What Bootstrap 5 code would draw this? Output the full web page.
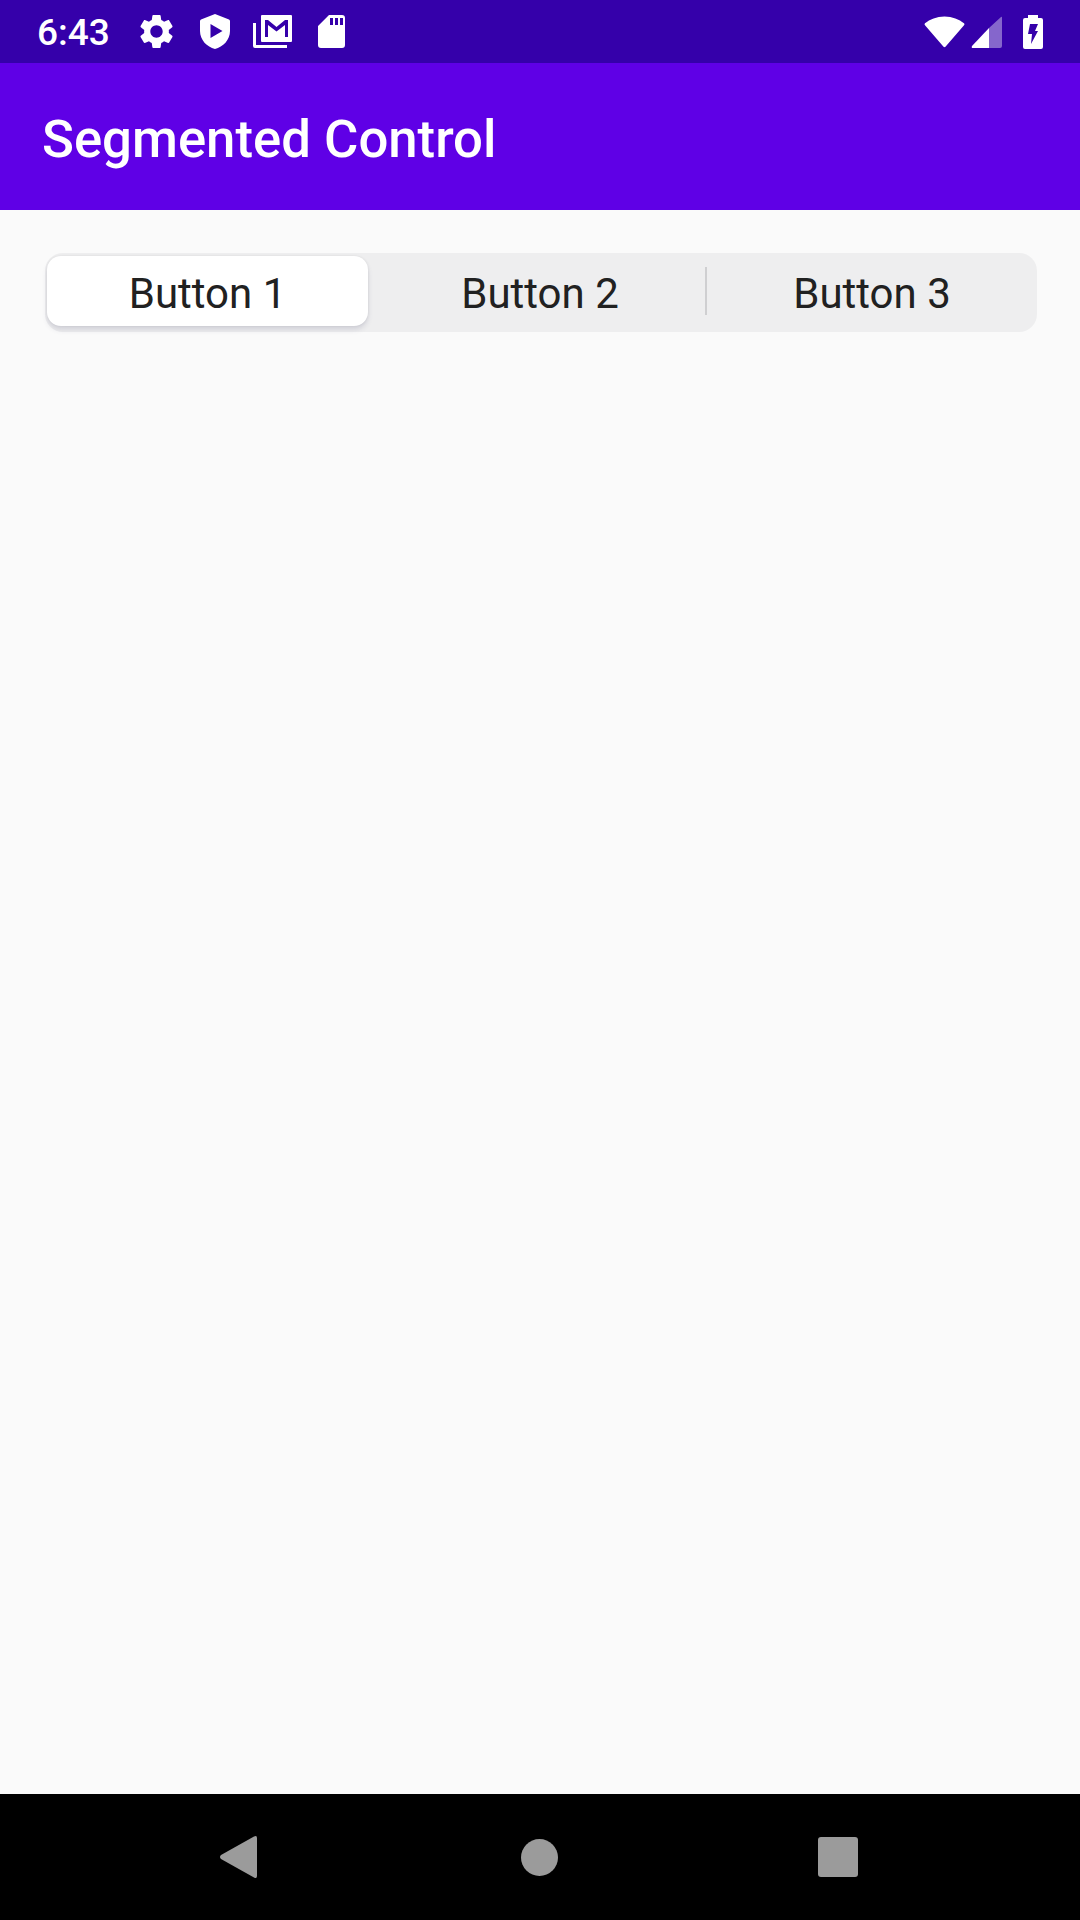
<!DOCTYPE html>
<html lang="en">
<head>
  <meta charset="UTF-8" />
  <meta name="viewport" content="width=device-width, initial-scale=1.0">
  <title>Segmented Control</title>
  <link href="https://cdn.jsdelivr.net/npm/bootstrap@5.3.3/dist/css/bootstrap.min.css" rel="stylesheet">
  <style>
    body{margin:0;background:#fafafa;font-family:Roboto,"Liberation Sans",sans-serif}
    .screen{width:1080px;height:1920px}
    .status-bar{height:63px;background:#3500aa;color:#fff;padding:0 37px 0 37px}
    .status-time{font-size:37px;line-height:1;font-weight:500;margin-right:30px;padding-top:2px}
    .status-icon{fill:#fff;display:block}
    .ic-shield{margin-left:27px}
    .ic-mail{margin-left:23px}
    .ic-sd{margin-left:26px}
    .ic-signal{margin-left:6px}
    .ic-battery{margin-left:21px}
    .app-bar{height:147px;background:#5f00e6;color:#fff;padding:5px 0 0 42px;font-size:52.7px;font-weight:500;line-height:1}
    .content-area{padding:43px 43px 0 45px}
    .seg-track{height:79px;background:#eeeeef;border-radius:18px;padding:3px 0 6px 2px}
    .seg-btn{flex:1 1 0;border:0;background:transparent;padding:6px 0 0;color:#212121;font-size:42px;line-height:1;border-radius:14px}
    .seg-btn.selected{flex:0 0 321px;background:#fff;box-shadow:0 4px 5px rgba(70,70,110,.15),0 0 3px rgba(0,0,0,.08)}
    .seg-btn.middle{flex:0 0 330px}
    .seg-sep{width:2px;height:48px;background:#cfcfd1;flex:none}
    .seg-gap{width:7px;flex:none}
    .nav-bar{height:126px;background:#000;padding-left:220px}
    .nav-icon{fill:#9b9b9b;display:block}
    .ic-home{margin-left:264px}
    .ic-recent{margin-left:260px}
  </style>
</head>
<body>
  <div class="screen d-flex flex-column">
    <!-- Status bar -->
    <div class="status-bar d-flex align-items-center flex-shrink-0">
      <span class="status-time">6:43</span>
      <svg class="status-icon" width="33" height="33" viewBox="2.4 2.4 19.2 19.2"><path fill-rule="evenodd" d="M19.14,12.94c0.04-0.3,0.06-0.61,0.06-0.94c0-0.32-0.02-0.64-0.07-0.94l2.03-1.58c0.18-0.14,0.23-0.41,0.12-0.61l-1.92-3.32c-0.12-0.22-0.37-0.29-0.59-0.22l-2.39,0.96c-0.5-0.38-1.03-0.7-1.62-0.94L14.4,2.81c-0.04-0.24-0.24-0.41-0.48-0.41h-3.84c-0.24,0-0.43,0.17-0.47,0.41L9.25,5.35C8.66,5.59,8.12,5.92,7.63,6.29L5.24,5.33c-0.22-0.08-0.47,0-0.59,0.22L2.74,8.87C2.62,9.08,2.66,9.34,2.86,9.48l2.03,1.58C4.84,11.36,4.8,11.69,4.8,12s0.02,0.64,0.07,0.94l-2.03,1.58c-0.18,0.14-0.23,0.41-0.12,0.61l1.92,3.32c0.12,0.22,0.37,0.29,0.59,0.22l2.39-0.96c0.5,0.38,1.03,0.7,1.62,0.94l0.36,2.54c0.05,0.24,0.24,0.41,0.48,0.41h3.84c0.24,0,0.44-0.17,0.47-0.41l0.36-2.54c0.59-0.24,1.13-0.56,1.62-0.94l2.39,0.96c0.22,0.08,0.47,0,0.59-0.22l1.92-3.32c0.12-0.22,0.07-0.47-0.12-0.61L19.14,12.94z M12,15.6c-1.98,0-3.6-1.62-3.6-3.6s1.62-3.6,3.6-3.6s3.6,1.62,3.6,3.6S13.98,15.6,12,15.6z"/></svg>
      <svg class="status-icon ic-shield" width="30" height="35" viewBox="0 0 30 35"><path fill-rule="evenodd" d="M15 0L29 5.500Q30 6 30 7V17C30 26 23 33 15 35C7 33 0 26 0 17V7Q0 6 1 5.500Z M10.500 10V24L22.500 17Z"/></svg>
      <svg class="status-icon ic-mail" width="39" height="33" viewBox="0 0 39 33"><path fill-rule="evenodd" d="M9 0H38Q39 0 39 1V26Q39 27 38 27H9Q8 27 8 26V1Q8 0 9 0Z M12 5V22H15V10L23.500 16.500L32 10V22H35V5H32L23.500 12L15 5Z"/><path d="M0 8H3V30H34V33H2Q0 33 0 31Z"/></svg>
      <svg class="status-icon ic-sd" width="27" height="33" viewBox="0 0 27 33"><path fill-rule="evenodd" d="M11 0H24Q27 0 27 3V30Q27 33 24 33H3Q0 33 0 30V11Z M12 3V10H15V3Z M17 3V10H20V3Z M22 3V10H25V3Z"/></svg>
      <svg class="status-icon ms-auto" width="41" height="32" viewBox="0 0 42 32"><path d="M21 0C29 0 36 3 41 7Q42 8 41 9L22 31Q21 32 20 31L1 9Q0 8 1 7C6 3 13 0 21 0Z"/></svg>
      <svg class="status-icon ic-signal" width="31" height="32" viewBox="0 0 31 32"><path opacity=".4" d="M18 12L30 1Q31 0 31 2V30Q31 32 29 32H18Z"/><path d="M18 12V32H2Q0 32 1 30Z"/></svg>
      <svg class="status-icon ic-battery" width="20" height="34" viewBox="0 0 20 34"><path fill-rule="evenodd" d="M5 0H15V3H18Q20 3 20 5V32Q20 34 18 34H2Q0 34 0 32V5Q0 3 2 3H5Z M7 9L5 19H9L8 29L15 16H12L15 9Z"/></svg>
    </div>

    <!-- App bar -->
    <div class="app-bar d-flex align-items-center flex-shrink-0">Segmented Control</div>

    <!-- Content -->
    <main class="content-area flex-grow-1">
      <div class="seg-track d-flex align-items-stretch">
        <button class="seg-btn selected" type="button">Button 1</button>
        <span class="seg-gap"></span>
        <button class="seg-btn middle" type="button">Button 2</button>
        <span class="seg-sep align-self-center"></span>
        <button class="seg-btn" type="button">Button 3</button>
      </div>
    </main>

    <!-- Nav bar -->
    <div class="nav-bar d-flex align-items-center flex-shrink-0">
      <svg class="nav-icon" width="37" height="42" viewBox="0 0 37 42"><path d="M1 19L34 .5Q37 -1 37 2V40Q37 43 34 41.500L1 23Q-1 21 1 19Z"/></svg>
      <svg class="nav-icon ic-home" width="37" height="37" viewBox="0 0 38 38"><circle cx="19" cy="19" r="19"/></svg>
      <svg class="nav-icon ic-recent" width="40" height="40" viewBox="0 0 40 40"><rect width="40" height="40" rx="3"/></svg>
    </div>
  </div>
  <script src="https://cdn.jsdelivr.net/npm/bootstrap@5.3.3/dist/js/bootstrap.bundle.min.js"></script>
</body>
</html>
